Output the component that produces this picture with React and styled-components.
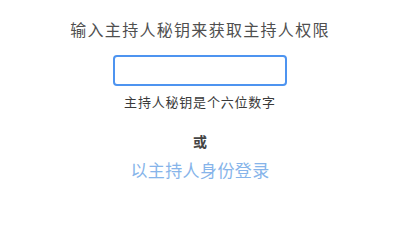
import React, { useState } from 'react';
import styled, { createGlobalStyle } from 'styled-components';

const GlobalStyle = createGlobalStyle`
  html, body {
    margin: 0;
    padding: 0;
    background: #ffffff;
  }
  body {
    font-family: "Noto Sans CJK SC", "Noto Sans", sans-serif;
  }
`;

const Page = styled.div`
  width: 400px;
  height: 200px;
  display: flex;
  flex-direction: column;
  align-items: center;
  padding-top: 17px;
  box-sizing: border-box;
`;

const Title = styled.h3`
  margin: 0;
  font-size: 16px;
  font-weight: 400;
  line-height: 24px;
  letter-spacing: 1.3px;
  color: #4f4f4f;
`;

const KeyInput = styled.input`
  margin-top: 14px;
  width: 174px;
  height: 31px;
  box-sizing: border-box;
  border: 2px solid #4d94f0;
  border-radius: 4px;
  outline: none;
  padding: 0 8px;
  font-size: 14px;
  background: #fff;
`;

const Hint = styled.p`
  margin: 7px 0 0;
  font-size: 13px;
  line-height: 18px;
  letter-spacing: 0.8px;
  color: #3a3a3a;
`;

const Or = styled.div`
  margin-top: 20px;
  font-size: 14px;
  font-weight: 700;
  line-height: 20px;
  color: #444444;
`;

const HostLink = styled.a`
  margin-top: 7px;
  font-size: 17px;
  line-height: 24px;
  letter-spacing: 0.4px;
  color: #86b4ea;
  text-decoration: none;
  cursor: pointer;
`;

const App = () => {
  const [key, setKey] = useState('');

  return (
    <>
      <GlobalStyle />
      <Page>
        <Title>输入主持人秘钥来获取主持人权限</Title>
        <KeyInput value={key} maxLength={6} onChange={(e) => setKey(e.target.value)} />
        <Hint>主持人秘钥是个六位数字</Hint>
        <Or>或</Or>
        <HostLink>以主持人身份登录</HostLink>
      </Page>
    </>
  );
};

export default App;
